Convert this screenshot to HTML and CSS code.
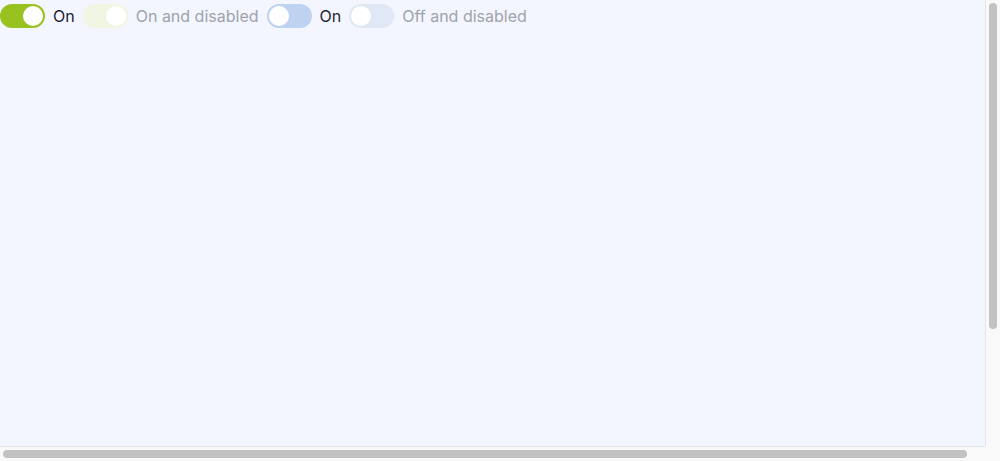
FILE: index.html
```html
<!DOCTYPE html>
<html>
<head>
<meta charset="utf-8">
<link rel="stylesheet" href="styles.css">
</head>
<body>
<div class="frame">
  <div class="content">
    <div class="row">
      <label class="item">
        <span class="toggle toggle-on"><span class="knob"></span></span>
        <span class="text">On</span>
      </label>
      <label class="item">
        <span class="toggle toggle-on-disabled"><span class="knob"></span></span>
        <span class="text text-disabled">On and disabled</span>
      </label>
      <label class="item">
        <span class="toggle toggle-off"><span class="knob"></span></span>
        <span class="text">On</span>
      </label>
      <label class="item">
        <span class="toggle toggle-off-disabled"><span class="knob"></span></span>
        <span class="text text-disabled">Off and disabled</span>
      </label>
    </div>
  </div>
  <div class="vtrack"><div class="vthumb"></div></div>
  <div class="htrack"><div class="hthumb"></div></div>
  <div class="corner"></div>
</div>
</body>
</html>
```

FILE: styles.css
```css
html, body {
  margin: 0;
  padding: 0;
  background: #f3f6fe;
  overflow: hidden;
}
body {
  font-family: Inter, "Noto Sans", sans-serif;
}
.frame {
  width: 1000px;
  height: 461px;
  display: grid;
  grid-template-columns: 985px 15px;
  grid-template-rows: 446px 15px;
}
.content {
  background: #f3f6fe;
  overflow: hidden;
}
.vtrack {
  box-sizing: border-box;
  background: #f9f9f9;
  border-left: 1px solid #e6e6e6;
  padding: 3px 3px 0 3px;
}
.vthumb {
  width: 8px;
  height: 326px;
  border-radius: 4px;
  background: #c2c2c2;
}
.htrack {
  box-sizing: border-box;
  background: #f9f9f9;
  border-top: 1px solid #e6e6e6;
  padding: 3px 0 0 3px;
}
.hthumb {
  width: 964px;
  height: 8px;
  border-radius: 4px;
  background: #c2c2c2;
}
.corner {
  background: #f9f9f9;
}
.row {
  display: flex;
  align-items: center;
  gap: 8px;
  padding-top: 4px;
}
.item {
  display: flex;
  align-items: center;
  gap: 8px;
}
.toggle {
  box-sizing: border-box;
  width: 45px;
  height: 24px;
  border-radius: 12px;
  padding: 2px;
  display: flex;
  align-items: center;
}
.knob {
  width: 20px;
  height: 20px;
  border-radius: 50%;
  background: #ffffff;
}
.toggle-on { background: #98c21f; justify-content: flex-end; }
.toggle-on-disabled { background: #f1f6e2; justify-content: flex-end; }
.toggle-off { background: #bed3f0; justify-content: flex-start; }
.toggle-off-disabled { background: #dfe8f7; justify-content: flex-start; }
.text {
  font-size: 16px;
  color: #1e2434;
  line-height: 24px;
}
.text-disabled {
  color: #9ea3ad;
}
```
